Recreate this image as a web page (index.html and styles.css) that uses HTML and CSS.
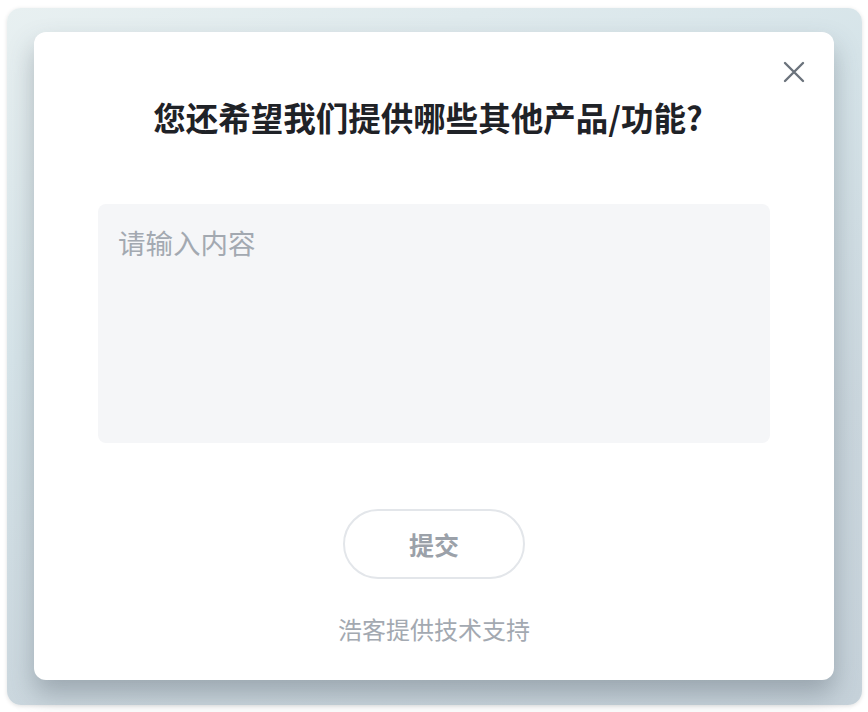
FILE: index.html
```html
<!DOCTYPE html>
<html lang="zh-CN">
<head>
    <meta charset="UTF-8">
    <meta name="viewport" content="width=device-width, initial-scale=1.0">
    <title>反馈</title>
    <link rel="stylesheet" href="styles.css">
</head>
<body>
    <div class="frame">
        <div class="card">
            <button class="close" aria-label="关闭">
                <svg width="24" height="24" viewBox="0 0 24 24">
                    <path d="M3 3 L21 21 M21 3 L3 21" stroke="#6b737c" stroke-width="2.4" stroke-linecap="round" fill="none"/>
                </svg>
            </button>
            <h1 class="title">您还希望我们提供哪些其他产品/功能?</h1>
            <textarea class="answer" placeholder="请输入内容"></textarea>
            <button class="submit">提交</button>
            <div class="footer">浩客提供技术支持</div>
        </div>
    </div>
</body>
</html>
```

FILE: styles.css
```css
body {
    margin: 0;
    background-color: #fff;
    font-family: "Noto Sans CJK SC", "Noto Sans", sans-serif;
}

.frame {
    margin: 8px 6px 7px 7px;
    height: 648px;
    padding: 24px 28px 25px 27px;
    border-radius: 14px;
    background: linear-gradient(160deg, #e8f0f1 0%, #d6e4e9 35%, #cbd7de 70%, #c6d2da 100%);
    box-shadow: 0 1px 4px rgba(0, 0, 0, 0.12);
}

.card {
    position: relative;
    height: 648px;
    box-sizing: border-box;
    padding-top: 65px;
    background-color: #fff;
    border-radius: 12px;
    display: flex;
    flex-direction: column;
    align-items: center;
    box-shadow: 0 14px 26px rgba(70, 80, 92, 0.35);
}

.close {
    position: absolute;
    top: 28px;
    right: 28px;
    width: 24px;
    height: 24px;
    padding: 0;
    border: none;
    background: none;
    cursor: pointer;
}

.close svg {
    display: block;
}

.title {
    margin: 0;
    padding-right: 12px;
    font-size: 32.5px;
    line-height: 40px;
    font-weight: 700;
    color: #1f2227;
}

.answer {
    margin-top: 67px;
    width: 672px;
    height: 239px;
    box-sizing: border-box;
    padding: 19px 20px;
    border: none;
    border-radius: 8px;
    background-color: #f5f6f8;
    font-family: inherit;
    font-size: 27.5px;
    line-height: 38px;
    color: #333;
    resize: none;
    outline: none;
}

.answer::placeholder {
    color: #a3a9b1;
}

.submit {
    margin-top: 66px;
    width: 182px;
    height: 70px;
    border: 2px solid #e3e6ea;
    border-radius: 35px;
    background-color: #fff;
    font-family: inherit;
    font-size: 25px;
    font-weight: 700;
    color: #9ba1a9;
    cursor: pointer;
}

.footer {
    margin-top: 35px;
    font-size: 24px;
    line-height: 30px;
    color: #a3a9b1;
}
```
